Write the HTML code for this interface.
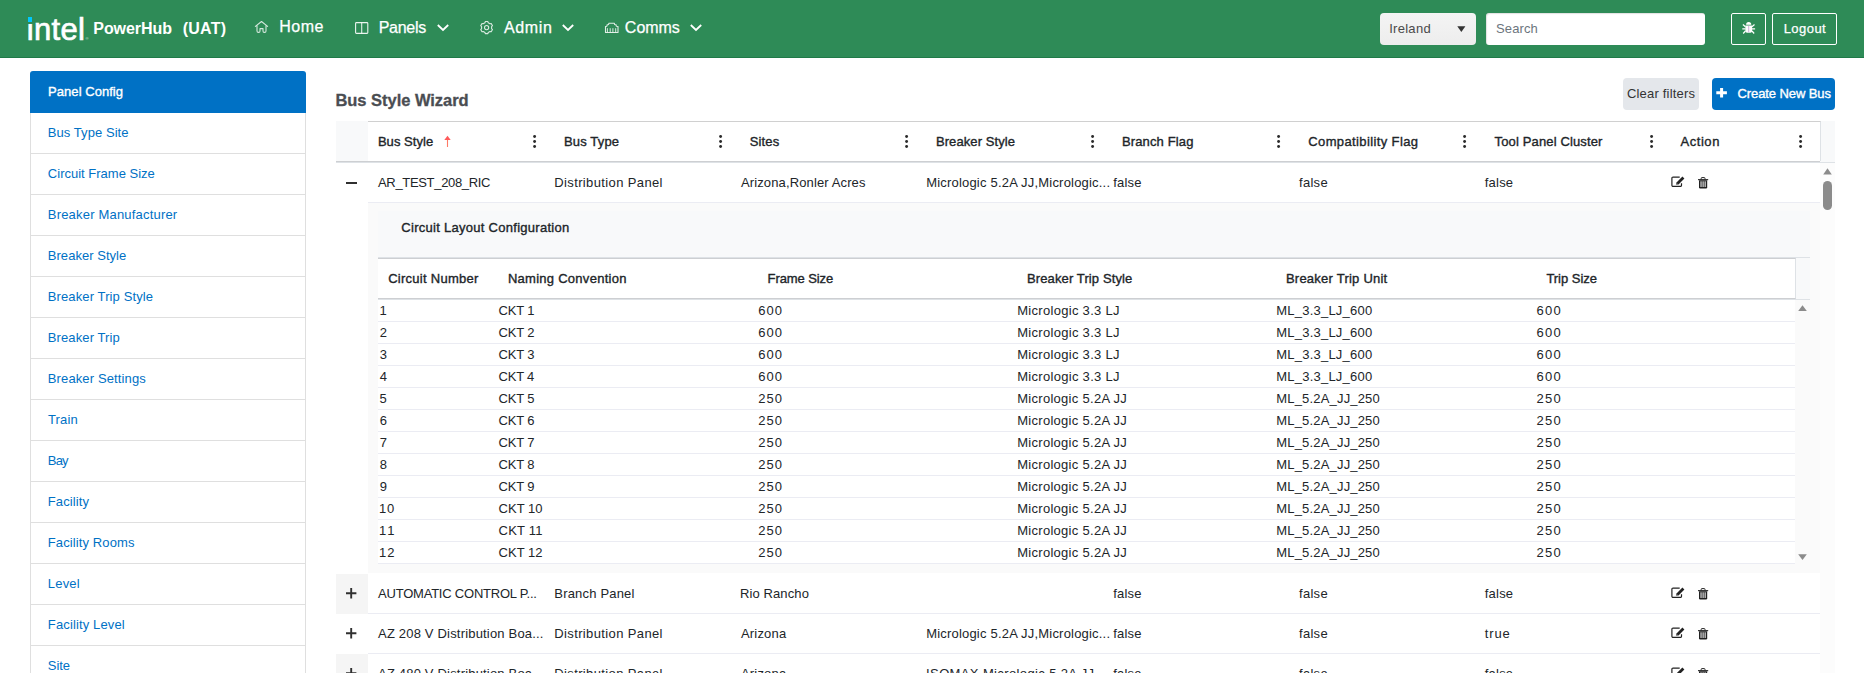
<!DOCTYPE html>
<html lang="en"><head><meta charset="utf-8"><title>PowerHub (UAT) - Bus Style Wizard</title>
<style>
html,body{margin:0;padding:0}
html{overflow:hidden;width:1864px;height:673px}
body{width:1864px;height:673px;overflow:hidden;background:#fff;position:relative;font-family:"Liberation Sans",sans-serif;color:#3d3f42}
.a{position:absolute}
.t{position:absolute;white-space:pre;line-height:normal}
.nav{left:0;top:0;width:1864px;height:57px;background:#2e8b57;border-bottom:1px solid #1f7a48}
.li{left:30px;width:274px;height:40px;border:1px solid #dfdfdf;background:#fff}
.hl{height:1px;background:#ebecf3}
svg{position:absolute;overflow:visible}
</style></head><body>
<nav>
<div class="a nav"></div>
<div class="t" style="left:26.65px;top:12px;font-size:31px;font-weight:400;-webkit-text-stroke:0.7px currentColor;color:#fff;letter-spacing:0.374px">intel</div>
<div class="a" style="left:26px;top:15px;width:8px;height:8.6px;background:#2e8b57"></div>
<div class="a" style="left:27.7px;top:17.4px;width:4.5px;height:4.2px;background:#00c7fd"></div>
<div class="t" style="left:85.6px;top:36.2px;font-size:4px;color:#fff;opacity:.75">®</div>
<svg style="left:254px;top:20px" width="15" height="14" viewBox="0 0 15 14"><path d="M1.400 6.400 L7.500 1.500 L13.600 6.400 M3 5.400 V11 Q3 12.400 4.400 12.400 H4.700 Q6 12.400 6 11 V8.600 H9 V11 Q9 12.400 10.300 12.400 H10.600 Q12 12.400 12 11 V5.400" fill="none" stroke="#fff" stroke-opacity=".8" stroke-width="1.1" stroke-linejoin="round" stroke-linecap="round"/></svg>
<svg style="left:355px;top:22px" width="14" height="12" viewBox="0 0 14 12"><rect x=".6" y=".6" width="12.2" height="10.8" rx=".8" fill="none" stroke="#fff" stroke-opacity=".9" stroke-width="1.1"/><path d="M6.7 .6V11.4" stroke="#fff" stroke-opacity=".85" stroke-width="1.1"/></svg>
<svg style="left:480px;top:21px" width="14" height="14" viewBox="0 0 14 14"><path d="M4.97 1.77 L5.31 0.54 L7.89 0.54 L8.23 1.77 L9.97 2.77 L11.21 2.45 L12.50 4.68 L11.60 5.59 L11.60 7.61 L12.50 8.52 L11.21 10.75 L9.97 10.43 L8.23 11.43 L7.89 12.66 L5.31 12.66 L4.97 11.43 L3.23 10.43 L1.99 10.75 L0.70 8.52 L1.60 7.61 L1.60 5.59 L0.70 4.68 L1.99 2.45 L3.23 2.77Z" fill="none" stroke="#fff" stroke-opacity=".82" stroke-width="1.1" stroke-linejoin="round"/><circle cx="6.6" cy="6.6" r="2.1" fill="none" stroke="#fff" stroke-opacity=".82" stroke-width="1.1"/></svg>
<svg style="left:604px;top:22px" width="15" height="12" viewBox="0 0 15 12"><path d="M1.500 10.500V4.500L2.900 4.200L3.100 2.900L4.600 2.500L4.900 1.200H10.300L10.600 2.500L12.100 2.900L12.300 4.200L14 4.500V10.500Z" fill="none" stroke="#fff" stroke-opacity=".85" stroke-width="1.100" stroke-linejoin="round"/><path d="M3.400 10.300V6.200M6.200 10.300V6.200M8.900 10.300V6.200M11.700 10.300V6.200" stroke="#fff" stroke-opacity=".8" stroke-width="1"/></svg>
<svg style="left:437px;top:24px" width="12" height="8" viewBox="0 0 12 8"><path d="M.8 1 L6 6 L11.2 1" fill="none" stroke="#fff" stroke-width="1.8"/></svg>
<svg style="left:562px;top:24px" width="12" height="8" viewBox="0 0 12 8"><path d="M.8 1 L6 6 L11.2 1" fill="none" stroke="#fff" stroke-width="1.8"/></svg>
<svg style="left:690px;top:24px" width="12" height="8" viewBox="0 0 12 8"><path d="M.8 1 L6 6 L11.2 1" fill="none" stroke="#fff" stroke-width="1.8"/></svg>
<div class="a" style="left:1380px;top:13px;width:96px;height:32px;border-radius:4px;background:linear-gradient(#f4f4f4,#ededed)"></div>
<svg style="left:1457px;top:26px" width="9" height="6" viewBox="0 0 9 6"><path d="M.3 .2H8.4L4.35 6Z" fill="#333"/></svg>
<div class="a" style="left:1486px;top:13px;width:219px;height:32px;border-radius:3px;background:#fff;box-shadow:inset 1px 1px 1px rgba(0,0,0,.12)"></div>
<div class="a" style="left:1731px;top:13px;width:33px;height:30px;border-radius:2px;border:1px solid #fff"></div>
<div class="a" style="left:1772px;top:13px;width:63px;height:30px;border-radius:2px;border:1px solid #fff"></div>
<svg style="left:1742px;top:21px" width="14" height="14" viewBox="0 0 14 14"><g fill="#fff"><path d="M4.1 3.7a2.6 2.7 0 0 1 5.2 0z"/><path d="M3.3 4.5h6.8v5.400a1.800 1.800 0 0 1-1.800 1.800h-3.200a1.800 1.800 0 0 1-1.800-1.800z"/></g><path d="M6.7 5V11.200" stroke="#b070c0" stroke-opacity=".7" stroke-width=".8"/><path d="M3.400 5.800L.9 3.500M3.400 7.900H.3M3.400 10L1.200 12.500M10 5.800l2.500-2.300M10 7.900h3.100M10 10l2.200 2.500" stroke="#fff" stroke-width="1.200" fill="none"/></svg>
<div class="t" style="left:93.31px;top:20px;font-size:16px;font-weight:700;color:#ffffff;letter-spacing:-0.067px">PowerHub</div>
<div class="t" style="left:182.81px;top:20px;font-size:16px;font-weight:700;color:#ffffff;letter-spacing:0.204px">(UAT)</div>
<div class="t" style="left:279.18px;top:18px;font-size:16px;font-weight:400;-webkit-text-stroke:0.25px currentColor;color:#ffffff;letter-spacing:0.510px">Home</div>
<div class="t" style="left:378.68px;top:19px;font-size:16px;font-weight:400;-webkit-text-stroke:0.25px currentColor;color:#ffffff;letter-spacing:-0.289px">Panels</div>
<div class="t" style="left:503.98px;top:19px;font-size:16px;font-weight:400;-webkit-text-stroke:0.25px currentColor;color:#ffffff;letter-spacing:0.646px">Admin</div>
<div class="t" style="left:624.86px;top:19px;font-size:16px;font-weight:400;-webkit-text-stroke:0.25px currentColor;color:#ffffff;letter-spacing:-0.025px">Comms</div>
<div class="t" style="left:1389.15px;top:21px;font-size:13px;font-weight:400;color:#4a4a4a;letter-spacing:0.291px">Ireland</div>
<div class="t" style="left:1496.12px;top:21px;font-size:13px;font-weight:400;color:#6c757d;letter-spacing:0.078px">Search</div>
<div class="t" style="left:1783.63px;top:21px;font-size:13px;font-weight:400;-webkit-text-stroke:0.25px currentColor;color:#ffffff;letter-spacing:0.463px">Logout</div>
</nav>
<aside>
<div class="a li" style="top:112px"></div>
<div class="a li" style="top:153px"></div>
<div class="a li" style="top:194px"></div>
<div class="a li" style="top:235px"></div>
<div class="a li" style="top:276px"></div>
<div class="a li" style="top:317px"></div>
<div class="a li" style="top:358px"></div>
<div class="a li" style="top:399px"></div>
<div class="a li" style="top:440px"></div>
<div class="a li" style="top:481px"></div>
<div class="a li" style="top:522px"></div>
<div class="a li" style="top:563px"></div>
<div class="a li" style="top:604px"></div>
<div class="a li" style="top:645px"></div>
<div class="a" style="left:30px;top:71px;width:276px;height:42px;background:#0071c5;border-radius:3px 3px 0 0"></div>
<div class="t" style="left:48.11px;top:84px;font-size:13px;font-weight:400;-webkit-text-stroke:0.36px currentColor;color:#ffffff;letter-spacing:0.042px">Panel Config</div>
<div class="t" style="left:47.81px;top:125px;font-size:13px;font-weight:400;color:#0071c5;letter-spacing:0.061px">Bus Type Site</div>
<div class="t" style="left:47.86px;top:166px;font-size:13px;font-weight:400;color:#0071c5;letter-spacing:0.002px">Circuit Frame Size</div>
<div class="t" style="left:47.81px;top:207px;font-size:13px;font-weight:400;color:#0071c5;letter-spacing:0.191px">Breaker Manufacturer</div>
<div class="t" style="left:47.81px;top:248px;font-size:13px;font-weight:400;color:#0071c5;letter-spacing:0.036px">Breaker Style</div>
<div class="t" style="left:47.81px;top:289px;font-size:13px;font-weight:400;color:#0071c5;letter-spacing:0.112px">Breaker Trip Style</div>
<div class="t" style="left:47.81px;top:330px;font-size:13px;font-weight:400;color:#0071c5;letter-spacing:0.108px">Breaker Trip</div>
<div class="t" style="left:47.81px;top:371px;font-size:13px;font-weight:400;color:#0071c5;letter-spacing:0.123px">Breaker Settings</div>
<div class="t" style="left:48.02px;top:412px;font-size:13px;font-weight:400;color:#0071c5;letter-spacing:0.145px">Train</div>
<div class="t" style="left:47.81px;top:453px;font-size:13px;font-weight:400;color:#0071c5;letter-spacing:-0.800px">Bay</div>
<div class="t" style="left:47.81px;top:494px;font-size:13px;font-weight:400;color:#0071c5;letter-spacing:0.116px">Facility</div>
<div class="t" style="left:47.81px;top:535px;font-size:13px;font-weight:400;color:#0071c5;letter-spacing:0.112px">Facility Rooms</div>
<div class="t" style="left:47.81px;top:576px;font-size:13px;font-weight:400;color:#0071c5;letter-spacing:0.206px">Level</div>
<div class="t" style="left:47.81px;top:617px;font-size:13px;font-weight:400;color:#0071c5;letter-spacing:0.140px">Facility Level</div>
<div class="t" style="left:47.82px;top:658px;font-size:13px;font-weight:400;color:#0071c5;letter-spacing:-0.063px">Site</div>
</aside>
<main>
<div class="a" style="left:1623px;top:78px;width:76px;height:32px;border-radius:4px;background:#e4e7eb"></div>
<div class="a" style="left:1712px;top:78px;width:123px;height:32px;border-radius:4px;background:#0071c5"></div>
<svg style="left:1716px;top:88px" width="11" height="10" viewBox="0 0 11 10"><path d="M5.6 0V9.6M.3 4.8H10.9" stroke="#fff" stroke-width="3"/></svg>
<div class="a" style="left:336px;top:121px;width:1499px;height:41px;background:#f8f9fa;border-bottom:1px solid #dee2e6"></div>
<div class="a" style="left:336px;top:161px;width:1484px;height:1px;background:#cdcfd2"></div>
<div class="a" style="left:368px;top:121px;width:1452px;height:39px;background:#fff;border-top:1px solid #d0d0d0;border-right:1px solid #dee2e6"></div>
<svg style="left:533.2px;top:135px" width="3.2" height="13" viewBox="0 0 3.2 13"><circle cx="1.6" cy="1.5" r="1.45" fill="#2b2b2b"/><circle cx="1.6" cy="6.5" r="1.45" fill="#2b2b2b"/><circle cx="1.6" cy="11.5" r="1.45" fill="#2b2b2b"/></svg>
<svg style="left:719.0px;top:135px" width="3.2" height="13" viewBox="0 0 3.2 13"><circle cx="1.6" cy="1.5" r="1.45" fill="#2b2b2b"/><circle cx="1.6" cy="6.5" r="1.45" fill="#2b2b2b"/><circle cx="1.6" cy="11.5" r="1.45" fill="#2b2b2b"/></svg>
<svg style="left:904.9px;top:135px" width="3.2" height="13" viewBox="0 0 3.2 13"><circle cx="1.6" cy="1.5" r="1.45" fill="#2b2b2b"/><circle cx="1.6" cy="6.5" r="1.45" fill="#2b2b2b"/><circle cx="1.6" cy="11.5" r="1.45" fill="#2b2b2b"/></svg>
<svg style="left:1090.9px;top:135px" width="3.2" height="13" viewBox="0 0 3.2 13"><circle cx="1.6" cy="1.5" r="1.45" fill="#2b2b2b"/><circle cx="1.6" cy="6.5" r="1.45" fill="#2b2b2b"/><circle cx="1.6" cy="11.5" r="1.45" fill="#2b2b2b"/></svg>
<svg style="left:1277.1px;top:135px" width="3.2" height="13" viewBox="0 0 3.2 13"><circle cx="1.6" cy="1.5" r="1.45" fill="#2b2b2b"/><circle cx="1.6" cy="6.5" r="1.45" fill="#2b2b2b"/><circle cx="1.6" cy="11.5" r="1.45" fill="#2b2b2b"/></svg>
<svg style="left:1463.4px;top:135px" width="3.2" height="13" viewBox="0 0 3.2 13"><circle cx="1.6" cy="1.5" r="1.45" fill="#2b2b2b"/><circle cx="1.6" cy="6.5" r="1.45" fill="#2b2b2b"/><circle cx="1.6" cy="11.5" r="1.45" fill="#2b2b2b"/></svg>
<svg style="left:1649.5px;top:135px" width="3.2" height="13" viewBox="0 0 3.2 13"><circle cx="1.6" cy="1.5" r="1.45" fill="#2b2b2b"/><circle cx="1.6" cy="6.5" r="1.45" fill="#2b2b2b"/><circle cx="1.6" cy="11.5" r="1.45" fill="#2b2b2b"/></svg>
<svg style="left:1799.2px;top:135px" width="3.2" height="13" viewBox="0 0 3.2 13"><circle cx="1.6" cy="1.5" r="1.45" fill="#2b2b2b"/><circle cx="1.6" cy="6.5" r="1.45" fill="#2b2b2b"/><circle cx="1.6" cy="11.5" r="1.45" fill="#2b2b2b"/></svg>
<svg style="left:444px;top:135px" width="7" height="12" viewBox="0 0 7 12"><path d="M3.5 .8L6.7 5H.3Z" fill="#ff5a5a"/><path d="M3.5 5V12" stroke="#ff7a66" stroke-width="1.1"/></svg>
<div class="a" style="left:1820px;top:163px;width:15px;height:510px;background:#fcfcfc"></div>
<svg style="left:1823px;top:168px" width="9" height="7" viewBox="0 0 9 7"><path d="M4.5 .3L8.8 6.6H.2Z" fill="#8b8b8b"/></svg>
<div class="a" style="left:1823px;top:181px;width:9px;height:29px;border-radius:4.5px;background:#8b8b8b"></div>
<div class="a hl" style="left:368px;top:202px;width:1452px"></div>
<div class="a" style="left:368px;top:203px;width:1452px;height:370px;background:#fafafa"></div>
<div class="a" style="left:378px;top:211px;width:1432px;height:353px;background:#f8f9fa"></div>
<div class="a" style="left:378px;top:257px;width:1432px;height:41px;background:#f8f9fa;border-top:1px solid #dee2e6;border-bottom:1px solid #dee2e6"></div>
<div class="a" style="left:378px;top:258px;width:1417px;height:39px;background:#fff;border-top:1px solid #cdcfd2;border-bottom:1px solid #cdcfd2;border-right:1px solid #dee2e6"></div>
<div class="a" style="left:378px;top:300px;width:1417px;height:264px;background:#fff"></div>
<div class="a hl" style="left:378px;top:321px;width:1417px"></div>
<div class="a hl" style="left:378px;top:343px;width:1417px"></div>
<div class="a hl" style="left:378px;top:365px;width:1417px"></div>
<div class="a hl" style="left:378px;top:387px;width:1417px"></div>
<div class="a hl" style="left:378px;top:409px;width:1417px"></div>
<div class="a hl" style="left:378px;top:431px;width:1417px"></div>
<div class="a hl" style="left:378px;top:453px;width:1417px"></div>
<div class="a hl" style="left:378px;top:475px;width:1417px"></div>
<div class="a hl" style="left:378px;top:497px;width:1417px"></div>
<div class="a hl" style="left:378px;top:519px;width:1417px"></div>
<div class="a hl" style="left:378px;top:541px;width:1417px"></div>
<div class="a hl" style="left:378px;top:563px;width:1417px"></div>
<div class="a" style="left:1795px;top:300px;width:15px;height:264px;background:#fafafa"></div>
<svg style="left:1798px;top:305px" width="9" height="6" viewBox="0 0 9 6"><path d="M4.5 .2L8.8 5.9H.2Z" fill="#8b8b8b"/></svg>
<svg style="left:1798px;top:553.5px" width="9" height="6" viewBox="0 0 9 6"><path d="M4.5 5.9L8.8 .2H.2Z" fill="#8b8b8b"/></svg>
<div class="a" style="left:336px;top:574px;width:32px;height:40px;background:#f5f5f5"></div>
<div class="a hl" style="left:368px;top:613px;width:1452px"></div>
<div class="a hl" style="left:368px;top:653px;width:1452px"></div>
<div class="a" style="left:336px;top:654px;width:32px;height:40px;background:#f5f5f5"></div>
<div class="a hl" style="left:368px;top:693px;width:1452px"></div>
<svg style="left:346px;top:181.5px" width="11" height="2" viewBox="0 0 11 2"><path d="M0 1H11" stroke="#303030" stroke-width="2"/></svg>
<svg style="left:346.200px;top:588.3px" width="10.400" height="10.400" viewBox="0 0 10.400 10.400"><path d="M5.200 0V10.400M0 5.200H10.400" stroke="#303030" stroke-width="1.900"/></svg>
<svg style="left:346.200px;top:628.3px" width="10.400" height="10.400" viewBox="0 0 10.400 10.400"><path d="M5.200 0V10.400M0 5.200H10.400" stroke="#303030" stroke-width="1.900"/></svg>
<svg style="left:346.200px;top:668.3px" width="10.400" height="10.400" viewBox="0 0 10.400 10.400"><path d="M5.200 0V10.400M0 5.200H10.400" stroke="#303030" stroke-width="1.900"/></svg>
<svg style="left:1670.500px;top:176.2px" width="14" height="12" viewBox="0 0 14 12"><path d="M10.5 7.300V9.300a1.100 1.100 0 0 1-1.100 1.100H2a1.100 1.100 0 0 1-1.100-1.100V2.200a1.100 1.100 0 0 1 1.100-1.100H8.700" fill="none" stroke="#222" stroke-width="1.200"/><path d="M4.900 8.600l.600-2.200 5.900-5.900 2 2-5.900 5.900z" fill="#222"/><path d="M5.600 7.900l.5-.5" stroke="#fff" stroke-width=".6"/></svg>
<svg style="left:1697.500px;top:176.5px" width="10.200" height="11.500" viewBox="0 0 10.200 11.500"><path d="M0 2.100H10.200V3.200H0z" fill="#222"/><path d="M3.200 2.200V1.300a.7.700 0 0 1 .7-.7H6.300a.7.700 0 0 1 .7.700v.900" fill="none" stroke="#222" stroke-width="1"/><path d="M1 3.200H9.200V10.300a1.200 1.200 0 0 1-1.200 1.200H2.200a1.200 1.200 0 0 1-1.200-1.200z" fill="#222"/><path d="M3.050 4.300V10M5.100 4.300V10M7.150 4.300V10" stroke="#fff" stroke-width="1"/></svg>
<svg style="left:1670.500px;top:587.2px" width="14" height="12" viewBox="0 0 14 12"><path d="M10.5 7.300V9.300a1.100 1.100 0 0 1-1.100 1.100H2a1.100 1.100 0 0 1-1.100-1.100V2.200a1.100 1.100 0 0 1 1.100-1.100H8.700" fill="none" stroke="#222" stroke-width="1.200"/><path d="M4.900 8.600l.600-2.200 5.900-5.900 2 2-5.900 5.900z" fill="#222"/><path d="M5.600 7.900l.5-.5" stroke="#fff" stroke-width=".6"/></svg>
<svg style="left:1697.500px;top:587.5px" width="10.200" height="11.500" viewBox="0 0 10.200 11.500"><path d="M0 2.100H10.200V3.200H0z" fill="#222"/><path d="M3.200 2.200V1.300a.7.700 0 0 1 .7-.7H6.300a.7.700 0 0 1 .7.700v.900" fill="none" stroke="#222" stroke-width="1"/><path d="M1 3.200H9.200V10.300a1.200 1.200 0 0 1-1.200 1.200H2.200a1.200 1.200 0 0 1-1.200-1.200z" fill="#222"/><path d="M3.050 4.300V10M5.100 4.300V10M7.150 4.300V10" stroke="#fff" stroke-width="1"/></svg>
<svg style="left:1670.500px;top:627.2px" width="14" height="12" viewBox="0 0 14 12"><path d="M10.5 7.300V9.300a1.100 1.100 0 0 1-1.100 1.100H2a1.100 1.100 0 0 1-1.100-1.100V2.200a1.100 1.100 0 0 1 1.100-1.100H8.700" fill="none" stroke="#222" stroke-width="1.200"/><path d="M4.900 8.600l.600-2.200 5.900-5.900 2 2-5.900 5.900z" fill="#222"/><path d="M5.600 7.900l.5-.5" stroke="#fff" stroke-width=".6"/></svg>
<svg style="left:1697.500px;top:627.5px" width="10.200" height="11.500" viewBox="0 0 10.200 11.500"><path d="M0 2.100H10.200V3.200H0z" fill="#222"/><path d="M3.200 2.200V1.300a.7.700 0 0 1 .7-.7H6.300a.7.700 0 0 1 .7.700v.900" fill="none" stroke="#222" stroke-width="1"/><path d="M1 3.200H9.200V10.300a1.200 1.200 0 0 1-1.200 1.200H2.200a1.200 1.200 0 0 1-1.200-1.200z" fill="#222"/><path d="M3.050 4.300V10M5.100 4.300V10M7.150 4.300V10" stroke="#fff" stroke-width="1"/></svg>
<svg style="left:1670.500px;top:667.2px" width="14" height="12" viewBox="0 0 14 12"><path d="M10.5 7.300V9.300a1.100 1.100 0 0 1-1.100 1.100H2a1.100 1.100 0 0 1-1.100-1.100V2.200a1.100 1.100 0 0 1 1.100-1.100H8.700" fill="none" stroke="#222" stroke-width="1.200"/><path d="M4.900 8.600l.600-2.200 5.900-5.900 2 2-5.900 5.900z" fill="#222"/><path d="M5.600 7.900l.5-.5" stroke="#fff" stroke-width=".6"/></svg>
<svg style="left:1697.500px;top:667.5px" width="10.200" height="11.500" viewBox="0 0 10.200 11.500"><path d="M0 2.100H10.200V3.200H0z" fill="#222"/><path d="M3.200 2.200V1.300a.7.700 0 0 1 .7-.7H6.300a.7.700 0 0 1 .7.700v.900" fill="none" stroke="#222" stroke-width="1"/><path d="M1 3.200H9.200V10.300a1.200 1.200 0 0 1-1.200 1.200H2.200a1.200 1.200 0 0 1-1.200-1.200z" fill="#222"/><path d="M3.050 4.300V10M5.100 4.300V10M7.150 4.300V10" stroke="#fff" stroke-width="1"/></svg>
<div class="t" style="left:335.43px;top:91px;font-size:16.5px;font-weight:700;-webkit-text-stroke:0.3px currentColor;color:#4a4d52;letter-spacing:-0.029px">Bus Style Wizard</div>
<div class="t" style="left:1626.96px;top:86px;font-size:13px;font-weight:400;color:#333333;letter-spacing:0.188px">Clear filters</div>
<div class="t" style="left:1737.44px;top:86px;font-size:13px;font-weight:400;-webkit-text-stroke:0.36px currentColor;color:#ffffff;letter-spacing:-0.083px">Create New Bus</div>
<div class="t" style="left:377.91px;top:134px;font-size:13px;font-weight:400;-webkit-text-stroke:0.36px currentColor;color:#212529;letter-spacing:0.043px">Bus Style</div>
<div class="t" style="left:563.91px;top:134px;font-size:13px;font-weight:400;-webkit-text-stroke:0.36px currentColor;color:#212529;letter-spacing:0.163px">Bus Type</div>
<div class="t" style="left:749.73px;top:134px;font-size:13px;font-weight:400;-webkit-text-stroke:0.36px currentColor;color:#212529;letter-spacing:0.135px">Sites</div>
<div class="t" style="left:935.91px;top:134px;font-size:13px;font-weight:400;-webkit-text-stroke:0.36px currentColor;color:#212529;letter-spacing:0.095px">Breaker Style</div>
<div class="t" style="left:1121.91px;top:134px;font-size:13px;font-weight:400;-webkit-text-stroke:0.36px currentColor;color:#212529;letter-spacing:0.136px">Branch Flag</div>
<div class="t" style="left:1308.29px;top:134px;font-size:13px;font-weight:400;-webkit-text-stroke:0.36px currentColor;color:#212529;letter-spacing:0.376px">Compatibility Flag</div>
<div class="t" style="left:1494.61px;top:134px;font-size:13px;font-weight:400;-webkit-text-stroke:0.36px currentColor;color:#212529;letter-spacing:0.136px">Tool Panel Cluster</div>
<div class="t" style="left:1680.41px;top:134px;font-size:13px;font-weight:400;-webkit-text-stroke:0.36px currentColor;color:#212529;letter-spacing:0.568px">Action</div>
<div class="t" style="left:378.04px;top:175px;font-size:13px;font-weight:400;color:#212529;letter-spacing:-0.331px">AR_TEST_208_RIC</div>
<div class="t" style="left:554.31px;top:175px;font-size:13px;font-weight:400;color:#212529;letter-spacing:0.370px">Distribution Panel</div>
<div class="t" style="left:740.94px;top:175px;font-size:13px;font-weight:400;color:#212529;letter-spacing:0.128px">Arizona,Ronler Acres</div>
<div class="t" style="left:926.16px;top:175px;font-size:13px;font-weight:400;color:#212529;letter-spacing:0.199px">Micrologic 5.2A JJ,Micrologic...</div>
<div class="t" style="left:1113.28px;top:175px;font-size:13px;font-weight:400;color:#212529;letter-spacing:0.164px">false</div>
<div class="t" style="left:1299.03px;top:175px;font-size:13px;font-weight:400;color:#212529;letter-spacing:0.293px">false</div>
<div class="t" style="left:1484.78px;top:175px;font-size:13px;font-weight:400;color:#212529;letter-spacing:0.219px">false</div>
<div class="t" style="left:378.04px;top:586px;font-size:13px;font-weight:400;color:#212529;letter-spacing:-0.218px">AUTOMATIC CONTROL P...</div>
<div class="t" style="left:554.31px;top:586px;font-size:13px;font-weight:400;color:#212529;letter-spacing:0.184px">Branch Panel</div>
<div class="t" style="left:740.01px;top:586px;font-size:13px;font-weight:400;color:#212529;letter-spacing:0.104px">Rio Rancho</div>
<div class="t" style="left:1113.28px;top:586px;font-size:13px;font-weight:400;color:#212529;letter-spacing:0.164px">false</div>
<div class="t" style="left:1299.03px;top:586px;font-size:13px;font-weight:400;color:#212529;letter-spacing:0.293px">false</div>
<div class="t" style="left:1484.78px;top:586px;font-size:13px;font-weight:400;color:#212529;letter-spacing:0.219px">false</div>
<div class="t" style="left:378.04px;top:626px;font-size:13px;font-weight:400;color:#212529;letter-spacing:0.186px">AZ 208 V Distribution Boa...</div>
<div class="t" style="left:554.31px;top:626px;font-size:13px;font-weight:400;color:#212529;letter-spacing:0.370px">Distribution Panel</div>
<div class="t" style="left:740.94px;top:626px;font-size:13px;font-weight:400;color:#212529;letter-spacing:0.194px">Arizona</div>
<div class="t" style="left:926.16px;top:626px;font-size:13px;font-weight:400;color:#212529;letter-spacing:0.199px">Micrologic 5.2A JJ,Micrologic...</div>
<div class="t" style="left:1113.28px;top:626px;font-size:13px;font-weight:400;color:#212529;letter-spacing:0.164px">false</div>
<div class="t" style="left:1299.03px;top:626px;font-size:13px;font-weight:400;color:#212529;letter-spacing:0.293px">false</div>
<div class="t" style="left:1484.78px;top:626px;font-size:13px;font-weight:400;color:#212529;letter-spacing:0.886px">true</div>
<div class="t" style="left:378.04px;top:666px;font-size:13px;font-weight:400;color:#212529;letter-spacing:0.186px">AZ 480 V Distribution Boa...</div>
<div class="t" style="left:554.31px;top:666px;font-size:13px;font-weight:400;color:#212529;letter-spacing:0.370px">Distribution Panel</div>
<div class="t" style="left:740.94px;top:666px;font-size:13px;font-weight:400;color:#212529;letter-spacing:0.194px">Arizona</div>
<div class="t" style="left:926.10px;top:666px;font-size:13px;font-weight:400;color:#212529;letter-spacing:0.375px">ISOMAX,Micrologic 5.2A JJ,...</div>
<div class="t" style="left:1113.28px;top:666px;font-size:13px;font-weight:400;color:#212529;letter-spacing:0.164px">false</div>
<div class="t" style="left:1299.03px;top:666px;font-size:13px;font-weight:400;color:#212529;letter-spacing:0.293px">false</div>
<div class="t" style="left:1484.78px;top:666px;font-size:13px;font-weight:400;color:#212529;letter-spacing:0.219px">false</div>
<div class="t" style="left:401.34px;top:220px;font-size:13px;font-weight:400;-webkit-text-stroke:0.36px currentColor;color:#212529;letter-spacing:0.277px">Circuit Layout Configuration</div>
<div class="t" style="left:388.14px;top:271px;font-size:13px;font-weight:400;-webkit-text-stroke:0.36px currentColor;color:#212529;letter-spacing:0.280px">Circuit Number</div>
<div class="t" style="left:507.91px;top:271px;font-size:13px;font-weight:400;-webkit-text-stroke:0.36px currentColor;color:#212529;letter-spacing:0.271px">Naming Convention</div>
<div class="t" style="left:767.61px;top:271px;font-size:13px;font-weight:400;-webkit-text-stroke:0.36px currentColor;color:#212529;letter-spacing:-0.105px">Frame Size</div>
<div class="t" style="left:1027.01px;top:271px;font-size:13px;font-weight:400;-webkit-text-stroke:0.36px currentColor;color:#212529;letter-spacing:0.115px">Breaker Trip Style</div>
<div class="t" style="left:1285.91px;top:271px;font-size:13px;font-weight:400;-webkit-text-stroke:0.36px currentColor;color:#212529;letter-spacing:0.236px">Breaker Trip Unit</div>
<div class="t" style="left:1546.41px;top:271px;font-size:13px;font-weight:400;-webkit-text-stroke:0.36px currentColor;color:#212529;letter-spacing:-0.035px">Trip Size</div>
<div class="t" style="left:379.54px;top:303px;font-size:13px;font-weight:400;color:#212529;letter-spacing:0.000px">1</div>
<div class="t" style="left:498.56px;top:303px;font-size:13px;font-weight:400;color:#212529;letter-spacing:-0.190px">CKT 1</div>
<div class="t" style="left:758.26px;top:303px;font-size:13px;font-weight:400;color:#212529;letter-spacing:1.058px">600</div>
<div class="t" style="left:1017.21px;top:303px;font-size:13px;font-weight:400;color:#212529;letter-spacing:0.298px">Micrologic 3.3 LJ</div>
<div class="t" style="left:1276.31px;top:303px;font-size:13px;font-weight:400;color:#212529;letter-spacing:0.215px">ML_3.3_LJ_600</div>
<div class="t" style="left:1536.46px;top:303px;font-size:13px;font-weight:400;color:#212529;letter-spacing:1.258px">600</div>
<div class="t" style="left:379.66px;top:325px;font-size:13px;font-weight:400;color:#212529;letter-spacing:0.000px">2</div>
<div class="t" style="left:498.56px;top:325px;font-size:13px;font-weight:400;color:#212529;letter-spacing:-0.182px">CKT 2</div>
<div class="t" style="left:758.26px;top:325px;font-size:13px;font-weight:400;color:#212529;letter-spacing:1.058px">600</div>
<div class="t" style="left:1017.21px;top:325px;font-size:13px;font-weight:400;color:#212529;letter-spacing:0.298px">Micrologic 3.3 LJ</div>
<div class="t" style="left:1276.31px;top:325px;font-size:13px;font-weight:400;color:#212529;letter-spacing:0.215px">ML_3.3_LJ_600</div>
<div class="t" style="left:1536.46px;top:325px;font-size:13px;font-weight:400;color:#212529;letter-spacing:1.258px">600</div>
<div class="t" style="left:379.63px;top:347px;font-size:13px;font-weight:400;color:#212529;letter-spacing:0.000px">3</div>
<div class="t" style="left:498.56px;top:347px;font-size:13px;font-weight:400;color:#212529;letter-spacing:-0.190px">CKT 3</div>
<div class="t" style="left:758.26px;top:347px;font-size:13px;font-weight:400;color:#212529;letter-spacing:1.058px">600</div>
<div class="t" style="left:1017.21px;top:347px;font-size:13px;font-weight:400;color:#212529;letter-spacing:0.298px">Micrologic 3.3 LJ</div>
<div class="t" style="left:1276.31px;top:347px;font-size:13px;font-weight:400;color:#212529;letter-spacing:0.215px">ML_3.3_LJ_600</div>
<div class="t" style="left:1536.46px;top:347px;font-size:13px;font-weight:400;color:#212529;letter-spacing:1.258px">600</div>
<div class="t" style="left:379.82px;top:369px;font-size:13px;font-weight:400;color:#212529;letter-spacing:0.000px">4</div>
<div class="t" style="left:498.56px;top:369px;font-size:13px;font-weight:400;color:#212529;letter-spacing:-0.239px">CKT 4</div>
<div class="t" style="left:758.26px;top:369px;font-size:13px;font-weight:400;color:#212529;letter-spacing:1.058px">600</div>
<div class="t" style="left:1017.21px;top:369px;font-size:13px;font-weight:400;color:#212529;letter-spacing:0.298px">Micrologic 3.3 LJ</div>
<div class="t" style="left:1276.31px;top:369px;font-size:13px;font-weight:400;color:#212529;letter-spacing:0.215px">ML_3.3_LJ_600</div>
<div class="t" style="left:1536.46px;top:369px;font-size:13px;font-weight:400;color:#212529;letter-spacing:1.258px">600</div>
<div class="t" style="left:379.62px;top:391px;font-size:13px;font-weight:400;color:#212529;letter-spacing:0.000px">5</div>
<div class="t" style="left:498.56px;top:391px;font-size:13px;font-weight:400;color:#212529;letter-spacing:-0.190px">CKT 5</div>
<div class="t" style="left:758.26px;top:391px;font-size:13px;font-weight:400;color:#212529;letter-spacing:1.058px">250</div>
<div class="t" style="left:1017.21px;top:391px;font-size:13px;font-weight:400;color:#212529;letter-spacing:0.287px">Micrologic 5.2A JJ</div>
<div class="t" style="left:1276.31px;top:391px;font-size:13px;font-weight:400;color:#212529;letter-spacing:0.175px">ML_5.2A_JJ_250</div>
<div class="t" style="left:1536.46px;top:391px;font-size:13px;font-weight:400;color:#212529;letter-spacing:1.258px">250</div>
<div class="t" style="left:379.66px;top:413px;font-size:13px;font-weight:400;color:#212529;letter-spacing:0.000px">6</div>
<div class="t" style="left:498.56px;top:413px;font-size:13px;font-weight:400;color:#212529;letter-spacing:-0.182px">CKT 6</div>
<div class="t" style="left:758.26px;top:413px;font-size:13px;font-weight:400;color:#212529;letter-spacing:1.058px">250</div>
<div class="t" style="left:1017.21px;top:413px;font-size:13px;font-weight:400;color:#212529;letter-spacing:0.287px">Micrologic 5.2A JJ</div>
<div class="t" style="left:1276.31px;top:413px;font-size:13px;font-weight:400;color:#212529;letter-spacing:0.175px">ML_5.2A_JJ_250</div>
<div class="t" style="left:1536.46px;top:413px;font-size:13px;font-weight:400;color:#212529;letter-spacing:1.258px">250</div>
<div class="t" style="left:379.66px;top:435px;font-size:13px;font-weight:400;color:#212529;letter-spacing:0.000px">7</div>
<div class="t" style="left:498.56px;top:435px;font-size:13px;font-weight:400;color:#212529;letter-spacing:-0.182px">CKT 7</div>
<div class="t" style="left:758.26px;top:435px;font-size:13px;font-weight:400;color:#212529;letter-spacing:1.058px">250</div>
<div class="t" style="left:1017.21px;top:435px;font-size:13px;font-weight:400;color:#212529;letter-spacing:0.287px">Micrologic 5.2A JJ</div>
<div class="t" style="left:1276.31px;top:435px;font-size:13px;font-weight:400;color:#212529;letter-spacing:0.175px">ML_5.2A_JJ_250</div>
<div class="t" style="left:1536.46px;top:435px;font-size:13px;font-weight:400;color:#212529;letter-spacing:1.258px">250</div>
<div class="t" style="left:379.68px;top:457px;font-size:13px;font-weight:400;color:#212529;letter-spacing:0.000px">8</div>
<div class="t" style="left:498.56px;top:457px;font-size:13px;font-weight:400;color:#212529;letter-spacing:-0.192px">CKT 8</div>
<div class="t" style="left:758.26px;top:457px;font-size:13px;font-weight:400;color:#212529;letter-spacing:1.058px">250</div>
<div class="t" style="left:1017.21px;top:457px;font-size:13px;font-weight:400;color:#212529;letter-spacing:0.287px">Micrologic 5.2A JJ</div>
<div class="t" style="left:1276.31px;top:457px;font-size:13px;font-weight:400;color:#212529;letter-spacing:0.175px">ML_5.2A_JJ_250</div>
<div class="t" style="left:1536.46px;top:457px;font-size:13px;font-weight:400;color:#212529;letter-spacing:1.258px">250</div>
<div class="t" style="left:379.65px;top:479px;font-size:13px;font-weight:400;color:#212529;letter-spacing:0.000px">9</div>
<div class="t" style="left:498.56px;top:479px;font-size:13px;font-weight:400;color:#212529;letter-spacing:-0.185px">CKT 9</div>
<div class="t" style="left:758.26px;top:479px;font-size:13px;font-weight:400;color:#212529;letter-spacing:1.058px">250</div>
<div class="t" style="left:1017.21px;top:479px;font-size:13px;font-weight:400;color:#212529;letter-spacing:0.287px">Micrologic 5.2A JJ</div>
<div class="t" style="left:1276.31px;top:479px;font-size:13px;font-weight:400;color:#212529;letter-spacing:0.175px">ML_5.2A_JJ_250</div>
<div class="t" style="left:1536.46px;top:479px;font-size:13px;font-weight:400;color:#212529;letter-spacing:1.258px">250</div>
<div class="t" style="left:378.94px;top:501px;font-size:13px;font-weight:400;color:#212529;letter-spacing:0.951px">10</div>
<div class="t" style="left:498.56px;top:501px;font-size:13px;font-weight:400;color:#212529;letter-spacing:0.015px">CKT 10</div>
<div class="t" style="left:758.26px;top:501px;font-size:13px;font-weight:400;color:#212529;letter-spacing:1.058px">250</div>
<div class="t" style="left:1017.21px;top:501px;font-size:13px;font-weight:400;color:#212529;letter-spacing:0.287px">Micrologic 5.2A JJ</div>
<div class="t" style="left:1276.31px;top:501px;font-size:13px;font-weight:400;color:#212529;letter-spacing:0.175px">ML_5.2A_JJ_250</div>
<div class="t" style="left:1536.46px;top:501px;font-size:13px;font-weight:400;color:#212529;letter-spacing:1.258px">250</div>
<div class="t" style="left:378.94px;top:523px;font-size:13px;font-weight:400;color:#212529;letter-spacing:1.975px">11</div>
<div class="t" style="left:498.56px;top:523px;font-size:13px;font-weight:400;color:#212529;letter-spacing:0.209px">CKT 11</div>
<div class="t" style="left:758.26px;top:523px;font-size:13px;font-weight:400;color:#212529;letter-spacing:1.058px">250</div>
<div class="t" style="left:1017.21px;top:523px;font-size:13px;font-weight:400;color:#212529;letter-spacing:0.287px">Micrologic 5.2A JJ</div>
<div class="t" style="left:1276.31px;top:523px;font-size:13px;font-weight:400;color:#212529;letter-spacing:0.175px">ML_5.2A_JJ_250</div>
<div class="t" style="left:1536.46px;top:523px;font-size:13px;font-weight:400;color:#212529;letter-spacing:1.258px">250</div>
<div class="t" style="left:378.94px;top:545px;font-size:13px;font-weight:400;color:#212529;letter-spacing:0.990px">12</div>
<div class="t" style="left:498.56px;top:545px;font-size:13px;font-weight:400;color:#212529;letter-spacing:0.033px">CKT 12</div>
<div class="t" style="left:758.26px;top:545px;font-size:13px;font-weight:400;color:#212529;letter-spacing:1.058px">250</div>
<div class="t" style="left:1017.21px;top:545px;font-size:13px;font-weight:400;color:#212529;letter-spacing:0.287px">Micrologic 5.2A JJ</div>
<div class="t" style="left:1276.31px;top:545px;font-size:13px;font-weight:400;color:#212529;letter-spacing:0.175px">ML_5.2A_JJ_250</div>
<div class="t" style="left:1536.46px;top:545px;font-size:13px;font-weight:400;color:#212529;letter-spacing:1.258px">250</div>
</main>
</body></html>
